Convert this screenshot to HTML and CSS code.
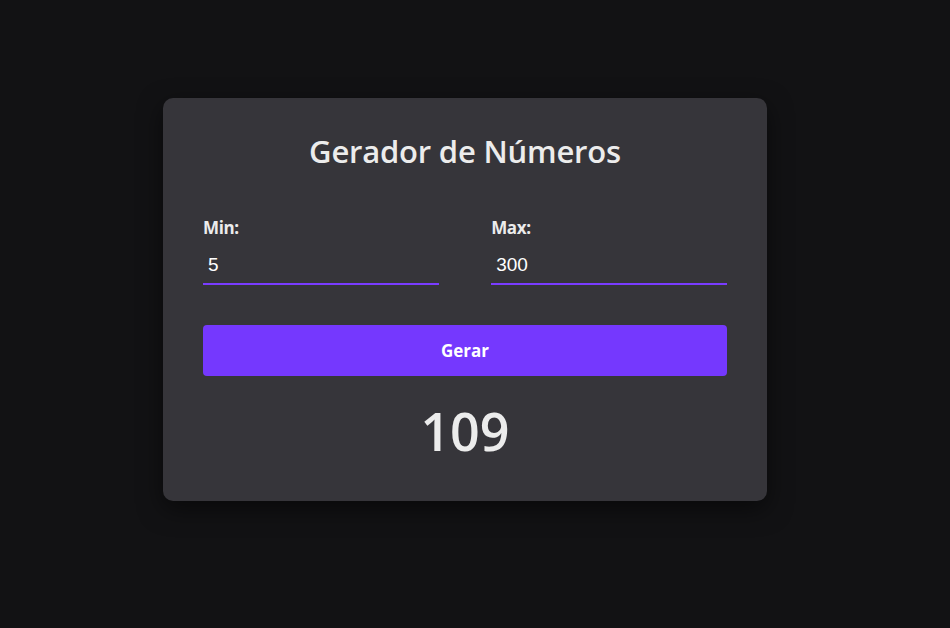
FILE: index.html
```html
<!DOCTYPE html>
<html lang="pt-BR">
<head>
<meta charset="utf-8">
<title>Gerador de Números</title>
<link rel="stylesheet" href="styles.css">
</head>
<body>
  <main class="card">
    <h1 class="title">Gerador de Números</h1>
    <div class="fields">
      <div class="field">
        <label class="label" for="min">Min:</label>
        <input class="input" id="min" type="number" value="5">
      </div>
      <div class="field">
        <label class="label" for="max">Max:</label>
        <input class="input" id="max" type="number" value="300">
      </div>
    </div>
    <button class="btn" type="button">Gerar</button>
    <div class="result">109</div>
  </main>
</body>
</html>
```

FILE: styles.css
```css
* { box-sizing: border-box; }

html, body {
  margin: 0;
  height: 100%;
}

body {
  background: #121214;
  font-family: "Open Sans", "Noto Sans", sans-serif;
  display: flex;
  justify-content: center;
  align-items: center;
  padding: 0 20px 30px 0;
}

.card {
  width: 604px;
  background: #36353a;
  border-radius: 10px;
  padding: 34px 40px 37px;
  box-shadow: 0 8px 24px rgba(0, 0, 0, 0.5);
  display: flex;
  flex-direction: column;
}

.title {
  margin: 0;
  text-align: center;
  color: #ececec;
  font-size: 31px;
  font-weight: 600;
  line-height: 38px;
  letter-spacing: -0.2px;
}

.fields {
  margin-top: 47px;
  display: flex;
  justify-content: space-between;
}

.field {
  width: 45%;
  display: flex;
  flex-direction: column;
}

.label {
  color: #ececec;
  font-size: 17px;
  font-weight: 700;
  line-height: 22px;
  letter-spacing: -0.4px;
}

.input {
  margin-top: 8px;
  background: transparent;
  border: none;
  border-bottom: 2px solid #7a3cff;
  color: #ffffff;
  font-family: "Liberation Sans", Arial, sans-serif;
  font-size: 19px;
  padding: 7px 5px 7px;
  outline: none;
  width: 100%;
  -moz-appearance: textfield;
}

.input::-webkit-outer-spin-button,
.input::-webkit-inner-spin-button {
  -webkit-appearance: none;
  margin: 0;
}

.btn {
  margin-top: 40px;
  height: 51px;
  border: none;
  border-radius: 4px;
  background: #7538fe;
  color: #ffffff;
  font-family: "Open Sans", "Noto Sans", sans-serif;
  font-size: 17px;
  font-weight: 700;
}

.result {
  margin-top: 22px;
  text-align: center;
  color: #ececec;
  font-size: 52px;
  font-weight: 600;
  line-height: 66px;
}
```
